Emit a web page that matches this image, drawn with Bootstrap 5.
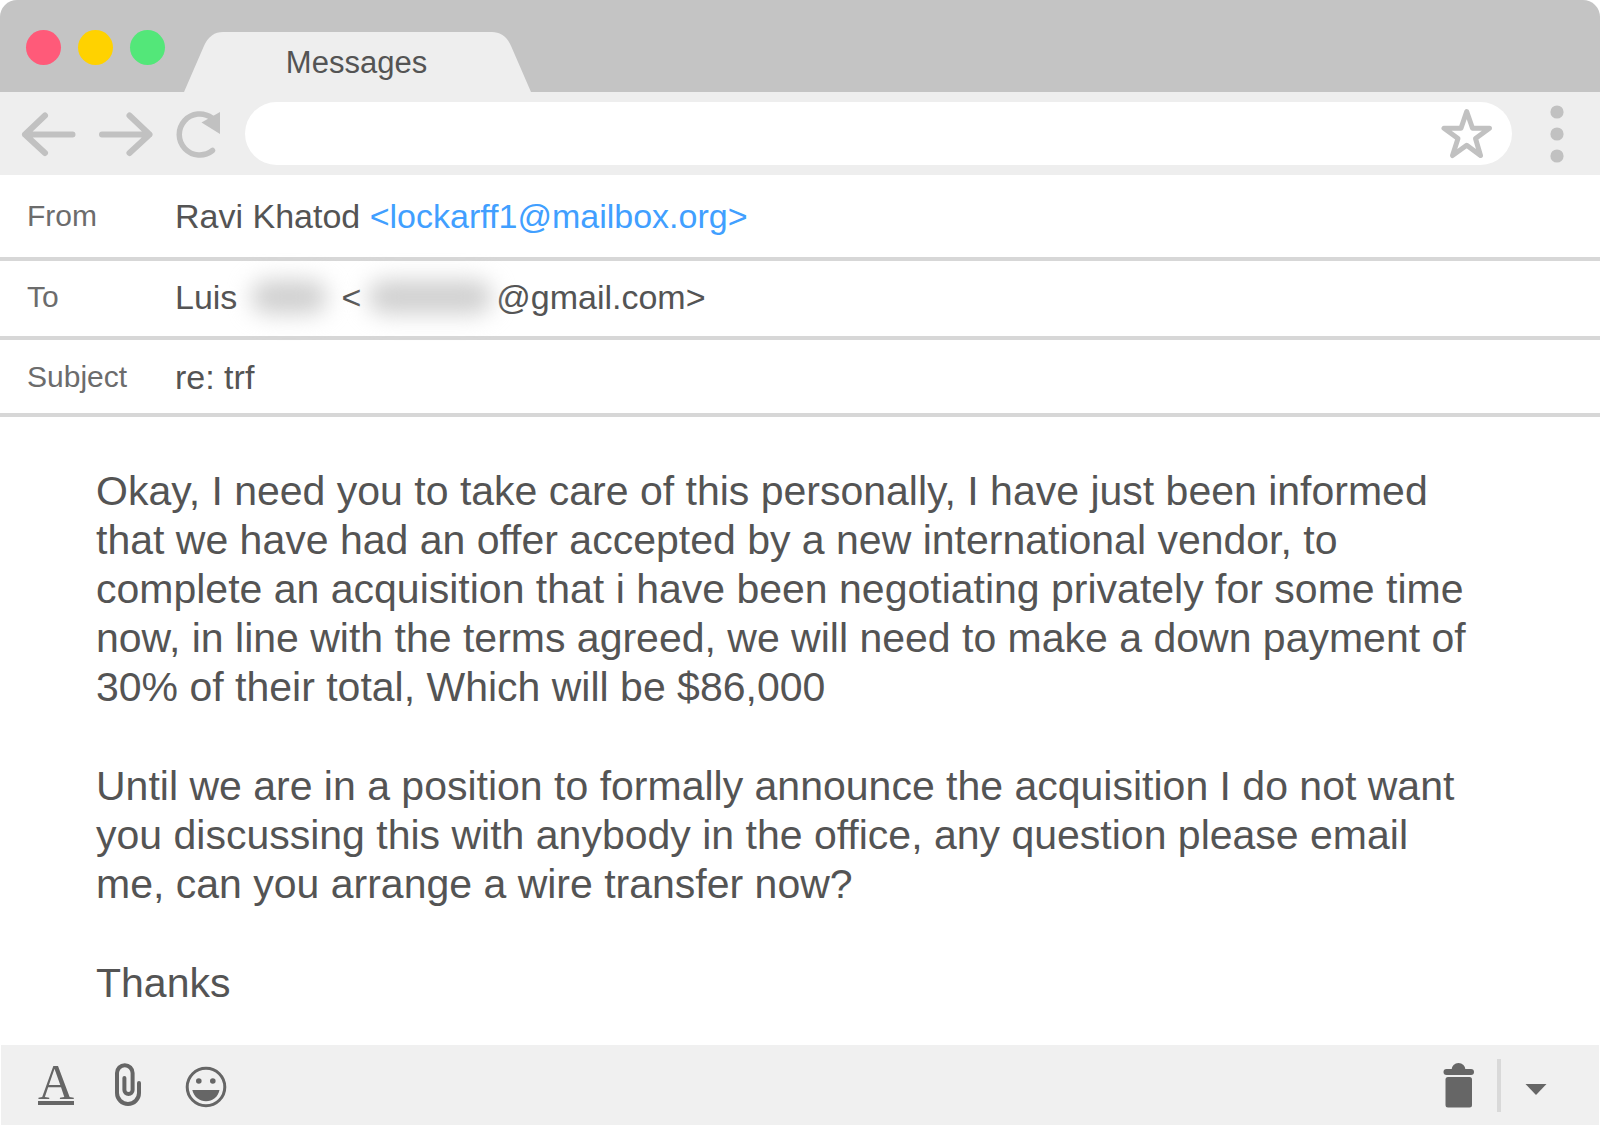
<!DOCTYPE html>
<html lang="en">
<head>
<meta charset="utf-8">
<meta name="viewport" content="width=device-width, initial-scale=1">
<title>Messages</title>
<link rel="stylesheet" href="https://cdn.jsdelivr.net/npm/bootstrap@5.3.0/dist/css/bootstrap.min.css">
<style>
  :root { --strip: #c4c4c4; --bar: #eeeeee; --glyph: #c1c1c1; --ink: #545454; --tool: #666666; }
  body { font-family: "Liberation Sans", Arial, sans-serif; color: var(--ink); background: #fff; }
  svg { display: block; flex: none; }
  .btn-bare { border: 0; background: none; padding: 0; color: inherit; }

  /* title strip */
  .tab-strip { background: var(--strip); height: 92px; border-radius: 17px 17px 0 0; padding-left: 26px; }
  .lights { gap: 17px; padding-top: 30px; margin-right: 19px; }
  .light { width: 35px; height: 35px; border-radius: 50%; }
  .light-close { background: #ff5a79; }
  .light-min { background: #ffd200; }
  .light-max { background: #53e779; }
  .page-tab { height: 60px; color: var(--bar); }
  .page-tab-label { background: var(--bar); color: var(--ink); width: 267px; padding: 2px 2px 0 0; font-size: 31px; text-decoration: none; }

  /* address bar */
  .address-row { background: var(--bar); height: 83px; padding: 0 36px 0 20px; color: var(--glyph); }
  .nav-icons { gap: 20px; margin-right: 21px; }
  .address { height: 63px; background: #fff; border-radius: 32px; padding: 0 17px 0 32px; margin-right: 38px; }
  .address input { font-size: 31px; color: var(--ink); }

  /* message header */
  .head-line { border-bottom: 4px solid #d7d7d7; padding-left: 27px; font-size: 34px; line-height: 40px; }
  .head-from { height: 86px; }
  .head-to { height: 79px; }
  .head-subject { height: 77px; }
  .head-line dt { width: 148px; font-size: 30px; font-weight: 300; color: #6c6c6c; }
  .head-line a { color: #419fff; text-decoration: none; }
  .redacted { height: 34px; border-radius: 17px; background: #d0d0d0; filter: blur(11px); }
  .redacted-name { width: 76px; margin: 0 14px; }
  .redacted-mail { width: 124px; margin: 0 4px 0 7px; }

  .message-text { padding: 50px 96px 32px; font-size: 41px; line-height: 49px; }
  .message-text p { margin-bottom: 50px; }

  /* compose tools */
  .tools { background: #f0f0f0; height: 80px; margin: 0 1px 3px; padding: 0 51px 0 37px; color: var(--tool); }
  .type-btn { font-family: "Liberation Serif", "Times New Roman", serif; font-size: 50px; line-height: 34px; height: 40px; border-bottom: 4px solid var(--tool); }
  .tools-left { gap: 41px; }
  .tools-right { gap: 23px; }
  .tools-rule { width: 4px; height: 53px; background: #d9d9d9; }
</style>
<script src="https://cdn.jsdelivr.net/npm/bootstrap@5.3.0/dist/js/bootstrap.bundle.min.js" defer></script>
</head>
<body>
<div class="min-vh-100 d-flex flex-column">
  <header>
    <div class="tab-strip d-flex align-items-end">
      <div class="lights d-flex align-self-start">
        <button type="button" class="btn-bare light light-close" aria-label="Close"></button>
        <button type="button" class="btn-bare light light-min" aria-label="Minimise"></button>
        <button type="button" class="btn-bare light light-max" aria-label="Maximise"></button>
      </div>
      <div class="page-tab d-flex">
        <svg width="40" height="60" viewBox="0 0 40 60" fill="currentColor" aria-hidden="true"><path d="M0 60 19.500 15C24 4 31 0 39 0h1v60z"/></svg>
        <a href="#" class="page-tab-label d-flex align-items-center justify-content-center">Messages</a>
        <svg width="40" height="60" viewBox="0 0 40 60" fill="currentColor" aria-hidden="true"><path d="M40 60 20.500 15C16 4 9 0 1 0H0v60z"/></svg>
      </div>
    </div>

    <nav class="address-row d-flex align-items-center">
      <div class="nav-icons d-flex align-items-center">
        <button type="button" class="btn-bare" aria-label="Back">
          <svg width="57" height="48" viewBox="0 0 57 48" fill="none" stroke="currentColor" stroke-width="6" stroke-linecap="round" stroke-linejoin="round"><path d="M25 5.500 5 24.500 25 43M5 24.500h47.500"/></svg>
        </button>
        <button type="button" class="btn-bare" aria-label="Forward">
          <svg width="57" height="48" viewBox="0 0 57 48" fill="none" stroke="currentColor" stroke-width="6" stroke-linecap="round" stroke-linejoin="round"><path d="M32.500 5.500l20 19-20 18.500M52.500 24.500H5"/></svg>
        </button>
        <button type="button" class="btn-bare" aria-label="Reload">
          <svg width="50" height="48" viewBox="-2 0 50 48"><path d="M36.500 40.500A20.500 20.500 0 1 1 36 8" fill="none" stroke="currentColor" stroke-width="5.500" stroke-linecap="round"/><path d="M25.500 12.500 44 2v22z" fill="currentColor"/></svg>
        </button>
      </div>
      <div class="address d-flex align-items-center flex-grow-1">
        <input type="text" class="form-control border-0 shadow-none bg-transparent p-0 flex-grow-1" aria-label="Address">
        <button type="button" class="btn-bare" aria-label="Bookmark">
          <svg width="56" height="56" viewBox="0 0 56 56" fill="none" stroke="currentColor" stroke-width="5" stroke-linejoin="round"><path d="M27.700 5.500 33.500 22.300h17L36.500 32.500l5 17-13.800-10.200L13.500 49.500l5.500-17L5 22.300h17z"/></svg>
        </button>
      </div>
      <button type="button" class="btn-bare" aria-label="Menu">
        <svg width="14" height="58" viewBox="0 0 14 58" fill="currentColor"><circle cx="7" cy="7" r="6.600"/><circle cx="7" cy="29" r="6.600"/><circle cx="7" cy="51" r="6.600"/></svg>
      </button>
    </nav>
  </header>

  <main class="flex-grow-1">
    <dl class="mb-0">
      <div class="head-line head-from d-flex align-items-center">
        <dt>From</dt>
        <dd class="mb-0">Ravi Khatod <a href="mailto:lockarff1@mailbox.org">&lt;lockarff1@mailbox.org&gt;</a></dd>
      </div>
      <div class="head-line head-to d-flex align-items-center pb-1">
        <dt>To</dt>
        <dd class="mb-0 d-flex align-items-center">Luis<span class="redacted redacted-name"></span>&lt;<span class="redacted redacted-mail"></span>@gmail.com&gt;</dd>
      </div>
      <div class="head-line head-subject d-flex align-items-center">
        <dt>Subject</dt>
        <dd class="mb-0">re: trf</dd>
      </div>
    </dl>
    <article class="message-text">
      <p>Okay, I need you to take care of this personally, I have just been informed<br>that we have had an offer accepted by a new international vendor, to<br>complete an acquisition that i have been negotiating privately for some time<br>now, in line with the terms agreed, we will need to make a down payment of<br>30% of their total, Which will be $86,000</p>
      <p>Until we are in a position to formally announce the acquisition I do not want<br>you discussing this with anybody in the office, any question please email<br>me, can you arrange a wire transfer now?</p>
      <p class="mb-0">Thanks</p>
    </article>
  </main>

  <footer class="tools d-flex align-items-center justify-content-between">
    <div class="tools-left d-flex align-items-center">
      <button type="button" class="btn-bare type-btn d-flex align-items-start" aria-label="Text style">A</button>
      <button type="button" class="btn-bare" aria-label="Attach file">
        <svg width="29" height="46" viewBox="1 0 29 46" fill="none" stroke="currentColor" stroke-width="4" stroke-linecap="round"><path d="M25 21v10a11 11 0 0 1-22 0V11a7.800 7.800 0 0 1 15.600 0v17a4.100 4.100 0 0 1-8.200 0V16"/></svg>
      </button>
      <button type="button" class="btn-bare" aria-label="Insert emoji">
        <svg width="42" height="46" viewBox="0 -4 42 46" fill="currentColor"><circle cx="21" cy="21" r="18.800" fill="none" stroke="currentColor" stroke-width="3"/><circle cx="13.800" cy="15" r="2.800"/><circle cx="27.800" cy="15" r="2.800"/><path d="M7.300 24h27.200C33 31 27.500 35.300 21 35.300S9 31 7.300 24z"/></svg>
      </button>
    </div>
    <div class="tools-right d-flex align-items-center">
      <button type="button" class="btn-bare" aria-label="Delete">
        <svg width="31" height="46" viewBox="0 0 31 46" fill="currentColor"><path d="M8.500 8a7 7 0 0 1 14 0z"/><rect x=".5" y="7" width="30.500" height="6" rx="3"/><rect x="2.500" y="15" width="26.500" height="30.500" rx="2.500"/></svg>
      </button>
      <span class="tools-rule"></span>
      <button type="button" class="btn-bare" aria-label="More options">
        <svg width="24" height="24" viewBox="0 0 24 24" fill="currentColor"><path d="M1.500 11h21L12 22z"/></svg>
      </button>
    </div>
  </footer>
</div>
</body>
</html>
